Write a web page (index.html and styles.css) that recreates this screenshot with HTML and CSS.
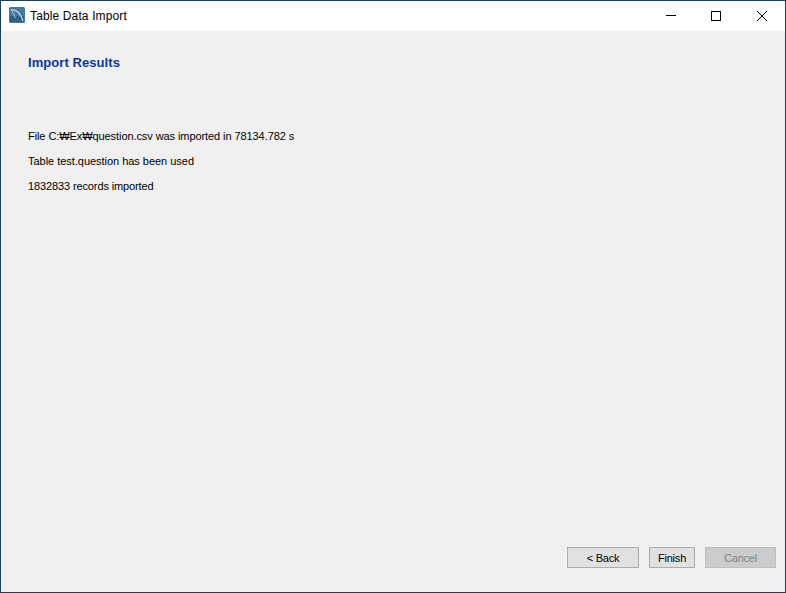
FILE: index.html
```html
<!DOCTYPE html>
<html lang="en">
<head>
<meta charset="utf-8">
<title>Table Data Import</title>
<link rel="stylesheet" href="styles.css">
</head>
<body>
<div class="window">
  <header class="titlebar">
    <svg class="app-icon" width="16" height="16" viewBox="0 0 16 16">
      <rect width="16" height="16" rx="1.5" fill="#44789e"/>
      <rect x="1" y="9" width="14" height="6" fill="#30608a"/>
      <path d="M2 3C7.5 2 11.5 6 14 14" fill="none" stroke="#c9d6e0" stroke-width="1.3"/>
      <path d="M3 3.5L6.5 11" fill="none" stroke="#a9bfce" stroke-width="1"/>
    </svg>
    <span class="title">Table Data Import</span>
    <div class="controls">
      <span class="control">
        <svg width="12" height="12" viewBox="0 0 12 12"><path d="M2 5.5H12" stroke="#000" stroke-width="1"/></svg>
      </span>
      <span class="control">
        <svg width="12" height="12" viewBox="0 0 12 12"><rect x="1.5" y="1.5" width="9" height="9" fill="none" stroke="#000" stroke-width="1"/></svg>
      </span>
      <span class="control">
        <svg width="12" height="12" viewBox="0 0 12 12"><path d="M1 1L11 11M11 1L1 11" stroke="#000" stroke-width="1" fill="none"/></svg>
      </span>
    </div>
  </header>
  <main class="content">
    <h1 class="heading">Import Results</h1>
    <div class="messages">
      <p class="line line-file">File C:₩Ex₩question.csv was imported in 78134.782 s</p>
      <p class="line line-table">Table test.question has been used</p>
      <p class="line line-count">1832833 records imported</p>
    </div>
    <footer class="buttons">
      <button class="btn btn-back" type="button">&lt; Back</button>
      <button class="btn btn-finish" type="button">Finish</button>
      <button class="btn btn-cancel" type="button" disabled>Cancel</button>
    </footer>
  </main>
</div>
</body>
</html>
```
FILE: styles.css
```css
* { box-sizing: border-box; }
html, body { margin: 0; padding: 0; }
body {
  width: 786px;
  height: 593px;
  overflow: hidden;
  font-family: "Liberation Sans", Arial, "Noto Sans CJK KR", sans-serif;
}
.window {
  width: 786px;
  height: 593px;
  display: flex;
  flex-direction: column;
  border: 1px solid #17405f;
  background: #f0f0f0;
}
.titlebar {
  height: 30px;
  flex: none;
  display: flex;
  align-items: center;
  background: #fff;
  padding-left: 8px;
}
.app-icon { flex: none; margin-bottom: 2px; }
.title {
  margin-left: 5px;
  font-size: 12px;
  letter-spacing: 0.13px;
  color: #000;
  margin-top: -1px;
}
.controls { margin-left: auto; display: flex; height: 100%; }
.control {
  width: 46px;
  display: flex;
  align-items: center;
  justify-content: center;
  margin-top: -1px;
}
.content {
  flex: 1;
  display: flex;
  flex-direction: column;
  padding: 0 9px 24px 27px;
}
.heading {
  margin: 24px 0 0;
  font-family: "Liberation Sans", Arial, sans-serif;
  font-size: 13px;
  letter-spacing: 0.07px;
  line-height: 15px;
  font-weight: 700;
  color: #0a389c;
}
.messages { margin-top: 59px; flex: 1; }
.line {
  margin: 0 0 11px;
  font-size: 11px;
  line-height: 14px;
  color: #000;
}
.line-file { letter-spacing: -0.08px; }
.line-table { letter-spacing: -0.03px; }
.line-count { letter-spacing: -0.12px; }
.buttons { display: flex; justify-content: flex-end; gap: 10px; }
.btn {
  height: 21px;
  padding: 0;
  font-family: inherit;
  font-size: 11px;
  letter-spacing: -0.2px;
  color: #000;
  background: #e1e1e1;
  border: 1px solid #adadad;
  border-radius: 0;
}
.btn-back { width: 72px; }
.btn-finish { width: 46px; }
.btn-cancel {
  width: 71px;
  color: #838383;
  background: #cccccc;
  border-color: #bfbfbf;
}
```
